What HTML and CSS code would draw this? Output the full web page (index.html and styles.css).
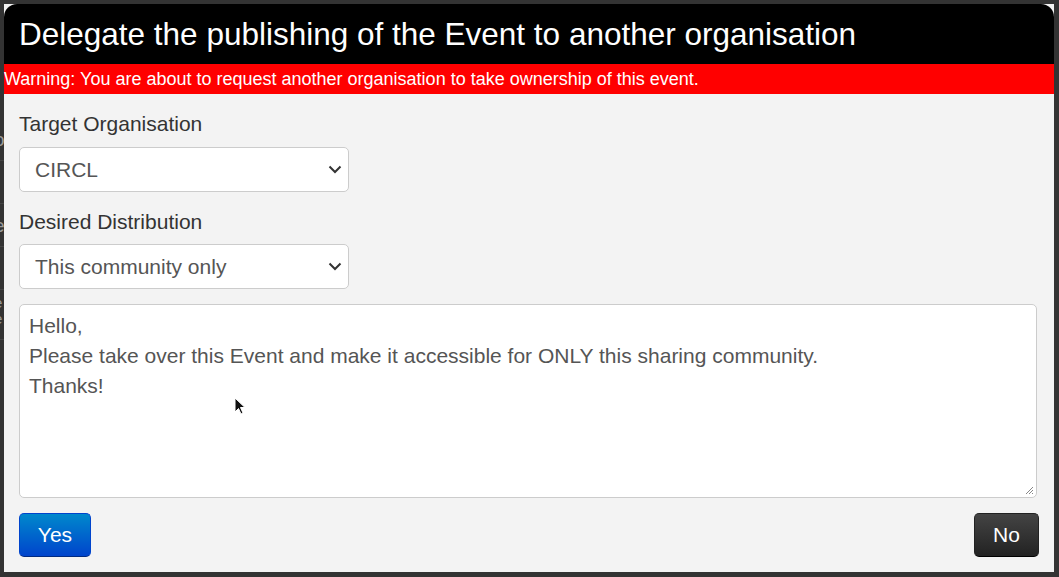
FILE: index.html
```html
<!DOCTYPE html>
<html>
<head>
<meta charset="utf-8">
<link rel="stylesheet" href="styles.css">
</head>
<body>
<div class="backdrop">
  <div class="bg-page">
    <div class="bg-row">o</div>
    <div class="bg-row">t</div>
    <div class="bg-row">e</div>
    <div class="bg-row">t</div>
    <div class="bg-row bg-last">e<br>e</div>
  </div>
  <div class="modal">
    <div class="modal-header">Delegate the publishing of the Event to another organisation</div>
    <div class="warning">Warning: You are about to request another organisation to take ownership of this event.</div>
    <div class="modal-body">
      <label class="field-label">Target Organisation</label>
      <div class="select">
        <span>CIRCL</span>
        <svg class="chev" width="14" height="9" viewBox="0 0 14 9"><path d="M1.5 1.5 L7 7 L12.5 1.5" fill="none" stroke="#333" stroke-width="2"/></svg>
      </div>
      <label class="field-label">Desired Distribution</label>
      <div class="select">
        <span>This community only</span>
        <svg class="chev" width="14" height="9" viewBox="0 0 14 9"><path d="M1.5 1.5 L7 7 L12.5 1.5" fill="none" stroke="#333" stroke-width="2"/></svg>
      </div>
      <div class="textarea">
        <div>Hello,</div>
        <div>Please take over this Event and make it accessible for ONLY this sharing community.</div>
        <div>Thanks!</div>
        <svg class="grip" width="10" height="10" viewBox="0 0 10 10"><path d="M9 2 L2 9 M9 5 L5 9 M9 8 L8 9" stroke="#888" stroke-width="1"/></svg>
      </div>
      <div class="actions">
        <button class="btn btn-primary">Yes</button>
        <button class="btn btn-inverse">No</button>
      </div>
    </div>
    <svg class="cursor" width="14" height="20" viewBox="0 0 14 20"><path d="M1 1 L1 15 L4.5 11.5 L7 17 L9 16 L6.5 10.5 L11 10.5 Z" fill="#111" stroke="#fff" stroke-width="1"/></svg>
  </div>
</div>
</body>
</html>
```
FILE: styles.css
```css
* { box-sizing: border-box; }
html, body { margin: 0; padding: 0; }
body {
  width: 1059px;
  height: 577px;
  overflow: hidden;
  background: #333333;
  font-family: "Liberation Sans", Arial, sans-serif;
}
.backdrop {
  position: relative;
  width: 1059px;
  height: 577px;
  padding: 4px 5px 5px 4px;
}
.bg-page {
  position: absolute;
  left: -6px;
  top: 118px;
  color: #9a9a9a;
  font-size: 19px;
}
.bg-row {
  height: 43px;
  border-bottom: 1px solid #444;
  width: 14px;
  line-height: 43px;
}
.bg-last {
  height: auto;
  font-size: 15px;
  line-height: 16px;
  padding: 5px 0 12px;
}
.modal {
  position: relative;
  width: 1050px;
  height: 568px;
  background: #f3f3f3;
  display: flex;
  flex-direction: column;
}
.modal-header {
  background: #000;
  color: #fff;
  height: 60px;
  border-radius: 13px 13px 0 0;
  font-size: 31.5px;
  line-height: 60px;
  padding-left: 15px;
}
.warning {
  background: #ff0000;
  color: #fff;
  height: 30px;
  line-height: 30px;
  font-size: 18px;
}
.modal-body {
  padding: 16px 15px 0 15px;
  display: flex;
  flex-direction: column;
  align-items: flex-start;
}
.field-label {
  font-size: 21px;
  color: #333;
  line-height: 28px;
  margin-bottom: 9px;
}
.select {
  width: 330px;
  height: 45px;
  background: #fff;
  border: 1px solid #ccc;
  border-radius: 5px;
  display: flex;
  align-items: center;
  justify-content: space-between;
  padding: 0 6px 0 15px;
  font-size: 21px;
  color: #555;
  margin-bottom: 16px;
}
.select + .field-label { margin-top: 0; margin-bottom: 8px; }
.textarea {
  position: relative;
  width: 1018px;
  height: 194px;
  background: #fff;
  border: 1px solid #ccc;
  border-radius: 5px;
  padding: 6px 9px;
  font-size: 21px;
  line-height: 30px;
  color: #555;
  margin-top: -1px;
}
.grip { position: absolute; right: 2px; bottom: 2px; }
.actions {
  width: 1020px;
  display: flex;
  justify-content: space-between;
  margin-top: 15px;
}
.btn {
  height: 44px;
  border-radius: 5px;
  font-family: "Liberation Sans", Arial, sans-serif;
  font-size: 21px;
  color: #fff;
  padding: 0;
  border: 1px solid rgba(0,0,0,0.2);
}
.btn-primary {
  width: 72px;
  background: linear-gradient(#0088cc, #0044cc);
  border-color: #0044cc #0044cc #002a80;
}
.btn-inverse {
  width: 65px;
  background: linear-gradient(#444444, #222222);
  border-color: #222 #222 #000;
}
.cursor {
  position: absolute;
  left: 230px;
  top: 393px;
}
```
